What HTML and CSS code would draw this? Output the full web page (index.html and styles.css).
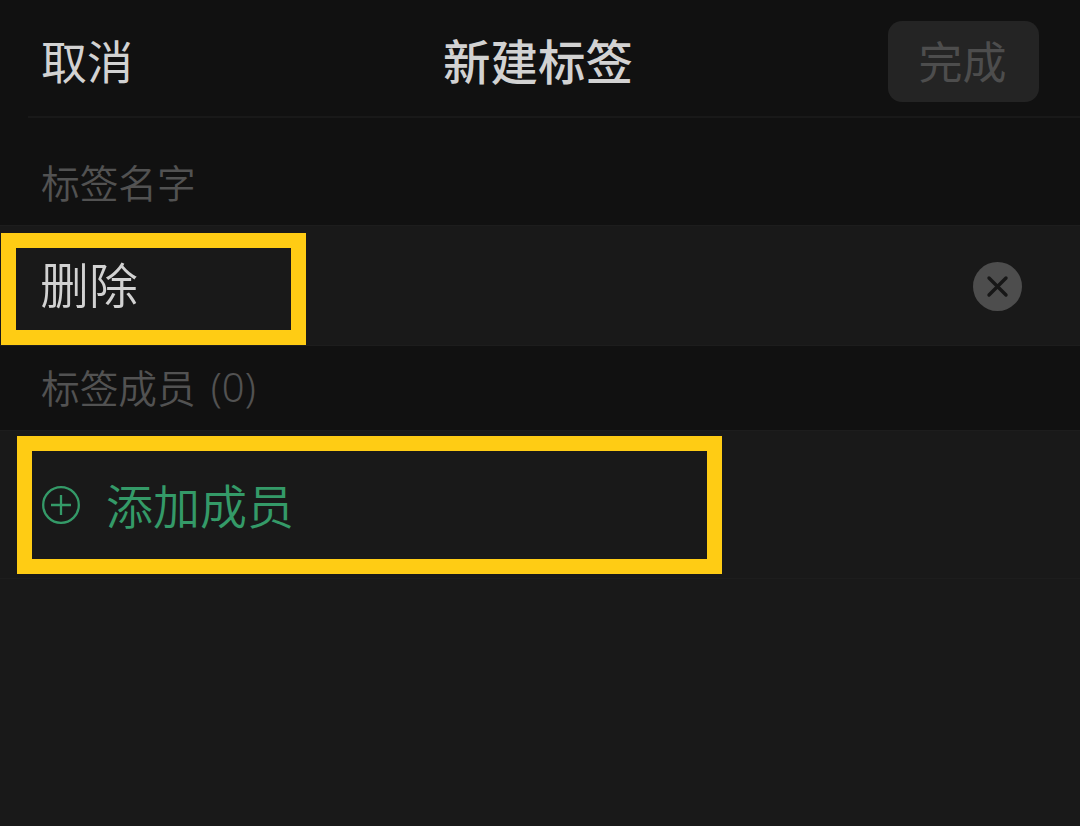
FILE: index.html
```html
<!DOCTYPE html>
<html lang="zh-CN">
<head>
    <meta charset="UTF-8">
    <meta name="viewport" content="width=device-width, initial-scale=1.0">
    <title>新建标签</title>
    <link rel="stylesheet" href="styles.css">
</head>
<body>
    <header class="header">
        <div class="cancel">取消</div>
        <h1 class="title">新建标签</h1>
        <div class="done"><span>完成</span></div>
    </header>
    <div class="label label-name">标签名字</div>
    <div class="row row-name">
        <div class="mark mark-name"><span class="name">删除</span></div>
        <svg class="clear" viewBox="0 0 50 50">
            <circle cx="24.5" cy="24.5" r="24.5" fill="#4d4d4d"/>
            <path d="M16 16l17 17M33 16l-17 17" stroke="#171717" stroke-width="3.4" stroke-linecap="round"/>
        </svg>
    </div>
    <div class="label label-members"><span>标签成员</span><span class="count">(0)</span></div>
    <div class="row row-add">
        <div class="mark mark-add">
            <svg class="plus" viewBox="0 0 40 40" fill="none" stroke="#349a68" stroke-width="2.3">
                <circle cx="20" cy="20" r="17.8"/>
                <path d="M20 10v20M10 20h20"/>
            </svg>
            <span class="add">添加成员</span>
        </div>
    </div>
</body>
</html>
```
FILE: styles.css
```css
* {
    box-sizing: border-box;
}
body {
    margin: 0;
    height: 826px;
    overflow: hidden;
    background: #191919;
    color: #d2d2d2;
    font-family: "Noto Sans CJK SC", sans-serif;
}
.header {
    display: grid;
    grid-template-columns: 1fr auto 1fr;
    align-items: center;
    height: 118px;
    padding: 4px 41px 0 41px;
    background: linear-gradient(#191919, #191919) 28px 100% / 100% 2px no-repeat #111;
}
.cancel {
    font-size: 46px;
    line-height: 60px;
    margin-top: -4px;
}
.title {
    margin: -2px 4px 0 0;
    font-size: 47.5px;
    line-height: 60px;
    font-weight: 500;
}
.done {
    justify-self: end;
    width: 151px;
    height: 81px;
    border-radius: 14px;
    background: #242424;
    color: #4d4d4d;
    font-size: 44px;
    line-height: 78px;
    text-align: center;
    text-indent: -2px;
}
.label {
    display: flex;
    padding-left: 41px;
    background: #111;
    color: #525252;
    font-size: 38.7px;
    font-weight: 350;
}
.label-name {
    height: 107px;
    line-height: 126px;
}
.label-members {
    height: 84px;
    line-height: 80px;
}
.count {
    margin: 1px 0 0 15px;
    font-family: "Noto Sans", sans-serif;
    font-size: 40px;
    font-weight: 350;
}
.row {
    display: flex;
    border-top: 1px solid #1d1d1d;
    border-bottom: 1px solid #1d1d1d;
}
.row-name {
    justify-content: space-between;
    align-items: center;
    height: 121px;
    padding: 7px 57px 0 1px;
}
.row-add {
    height: 149px;
    padding: 5px 0 0 17px;
}
.mark {
    display: flex;
    align-items: center;
    border: 15px solid #ffcc14;
}
.mark-name {
    width: 305px;
    height: 112px;
    padding-left: 24px;
}
.name {
    font-size: 49px;
    font-weight: 350;
    line-height: 60px;
    margin-top: -12px;
}
.clear {
    width: 50px;
    height: 50px;
    margin-top: -5px;
}
.mark-add {
    width: 705px;
    height: 138px;
    padding-left: 9px;
}
.plus {
    width: 40px;
    height: 40px;
}
.add {
    margin: -3px 0 0 25px;
    color: #349a68;
    font-size: 47px;
    font-weight: 350;
    line-height: 60px;
}
```
